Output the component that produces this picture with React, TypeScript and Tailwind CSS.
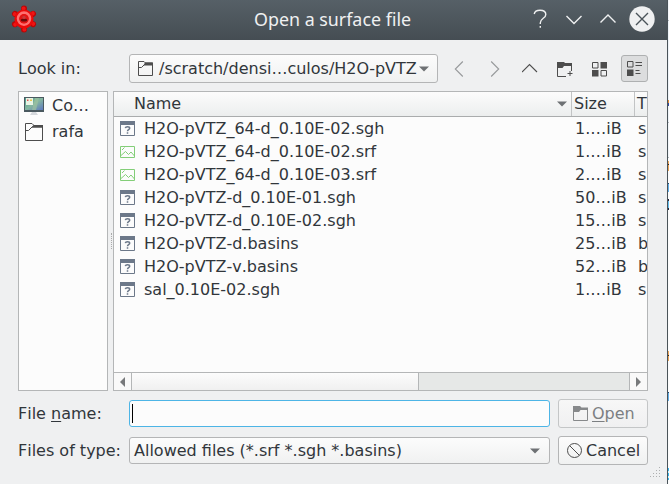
import React from "react";

type Kind = "unknown" | "image";
const files: { name: string; size: string; type: string; kind: Kind }[] = [
  { name: "H2O-pVTZ_64-d_0.10E-02.sgh", size: "1.…iB", type: "s", kind: "unknown" },
  { name: "H2O-pVTZ_64-d_0.10E-02.srf", size: "1.…iB", type: "s", kind: "image" },
  { name: "H2O-pVTZ_64-d_0.10E-03.srf", size: "2.…iB", type: "s", kind: "image" },
  { name: "H2O-pVTZ-d_0.10E-01.sgh", size: "50…iB", type: "s", kind: "unknown" },
  { name: "H2O-pVTZ-d_0.10E-02.sgh", size: "15…iB", type: "s", kind: "unknown" },
  { name: "H2O-pVTZ-d.basins", size: "25…iB", type: "b", kind: "unknown" },
  { name: "H2O-pVTZ-v.basins", size: "52…iB", type: "b", kind: "unknown" },
  { name: "sal_0.10E-02.sgh", size: "1.…iB", type: "s", kind: "unknown" },
];

// Slivers of the window behind the dialog: [height, colour]
const backdrop: [number, string][] = [
  [20, "#f3f6fa"], [1, "#b4b9be"], [79, "#eef3f8"], [3, "#e08a3c"], [3, "#344a9c"], [16, "#eef3f8"], [1, "#b4b9be"],
  [34, "#f1f5f9"], [1, "#b4b9be"], [3, "#fcfcfc"], [3, "#eda65a"], [1, "#33241a"], [6, "#eda65a"], [12, "#fcfcfc"],
  [1, "#1d4a70"], [8, "#65b1ea"], [7, "#fcfcfc"], [2, "#24243c"], [7, "#65c0f0"], [2, "#24243c"], [141, "#fcfcfc"],
  [4, "#eda65a"], [1, "#33241a"], [5, "#eda65a"], [31, "#fcfcfc"], [1, "#1d4a70"], [8, "#65b1ea"], [67, "#fcfcfc"],
  [3, "#38b8f0"], [2, "#d8f4fc"], [3, "#38b8f0"], [2, "#d8f4fc"], [2, "#38b8f0"], [4, "#fcfcfc"],
];

function AppIcon() {
  return (
    <svg width="26" height="28" viewBox="0 0 26 28" className="mb-[2px] shrink-0">
      {[0, 60, 120, 180, 240, 300].map((a) => (
        <g key={a} transform={`rotate(${a} 13 14)`}>
          <circle cx="13" cy="3.600" r="3" fill="#b80606" />
          <circle cx="12.600" cy="3.600" r="2" fill="#ee1414" />
        </g>
      ))}
      <circle cx="13" cy="14" r="9.600" fill="#ea0a0a" />
      <circle cx="13" cy="13.600" r="6" fill="none" stroke="#ff7070" strokeWidth="2.600" />
      <circle cx="13" cy="14" r="4.600" fill="#e01616" />
      <ellipse cx="13" cy="15" rx="3.200" ry="1.600" fill="#6a0b0b" />
      <circle cx="13" cy="12.400" r="1.700" fill="#c83a3a" />
    </svg>
  );
}

function Folder({ size = 15 }: { size?: number }) {
  return (
    <svg width={size} height={size} viewBox={`0 0 ${size} ${size}`} fill="none" stroke="#4d4d4d" className="shrink-0">
      <path d={size === 15 ? "M.5.500h5.500l1.500 1.500h7v12.500H.5z" : "M.5.500h6.500l2 2h8.500v15H.5z"} />
      <path d={size === 15 ? "M.5 6.500h3l3-3H14" : "M.5 7.500h3l4-4H17"} />
      <path d={size === 15 ? "M7 1.500h8V4.500H5.500z" : "M8.500 2H18v2.800H6.500z"} fill="#4d4d4d" stroke="none" />
    </svg>
  );
}

function Computer() {
  return (
    <svg width="20" height="18" viewBox="0 0 20 18" className="shrink-0">
      <defs>
        <linearGradient id="screen" x1="0" y1="0" x2="1" y2="1">
          <stop offset="0" stopColor="#4b9a8c" />
          <stop offset=".5" stopColor="#86b7a0" />
          <stop offset="1" stopColor="#5d78c0" />
        </linearGradient>
      </defs>
      <rect width="20" height="15" fill="#4b5a60" />
      <rect x="1" y="1" width="18" height="12" fill="url(#screen)" />
      <path d="M11 1h4l-3 12H8z" fill="#9cc2a0" opacity=".7" />
      <rect x="2" y="1" width="7" height="7" fill="#e8f4e4" />
      <path d="M3 2.500h1.500V4H3z" fill="#e05050" />
      <path d="M6 2.500h2V4H6z" fill="#e8c848" />
      <path d="M8 15h4l2 3H6z" fill="#d5d8dc" />
    </svg>
  );
}

function FileIcon({ kind }: { kind: Kind }) {
  if (kind === "image")
    return (
      <svg width="15" height="15" viewBox="0 0 15 15" fill="none" stroke="#83ce78" className="shrink-0">
        <path d="M.5 2.500h14v11H.5z" />
        <path d="M1 11.500l4.500-4 3 3L11 8l3.500 4M2 6l2.500-2.500" />
      </svg>
    );
  return (
    <svg width="15" height="15" viewBox="0 0 15 15" fill="none" stroke="#6c7889" className="shrink-0">
      <path d="M.5.5h14v14H.5z" />
      <path d="M0 0h15v4H0z" fill="#6c7889" stroke="none" />
      <path d="M5.300 7.200c.2-1 1-1.400 2.200-1.400 1.300 0 2.200.5 2.200 1.500 0 1.400-2.200 1.400-2.200 2.900M7.500 11.300v1.500" strokeWidth="1.500" />
    </svg>
  );
}

function Down() {
  return (
    <svg width="10" height="6" viewBox="0 0 10 6" className="shrink-0">
      <path d="M0 .5h10L5 5.500z" fill="#6e7174" />
    </svg>
  );
}

function Chevron({ d, color }: { d: string; color: string }) {
  return (
    <svg width="16" height="16" viewBox="0 0 16 16" fill="none" stroke={color} strokeWidth="1.100" className="shrink-0">
      <path d={d} />
    </svg>
  );
}

function TitleBar() {
  return (
    <header className="flex h-10 items-center bg-gradient-to-b from-[#566067] to-[#454d53] pl-[11px] text-[#eff0f1]">
      <AppIcon />
      <h1 className="mb-[2px] ml-[217px] w-[276px] whitespace-nowrap font-['Noto_Sans',sans-serif] text-[17.850px] leading-6">Open a surface file</h1>
      <svg width="126" height="28" viewBox="0 0 126 28" fill="none" stroke="#eff0f1" strokeWidth="1.400" className="mb-[2px] shrink-0">
        <path d="M4.200 9C4.700 6.300 6.900 5.200 10 5.200c3.400 0 5.800 1.500 5.800 4.200 0 4.300-5.500 3.500-5.500 8.600v1M10.300 21v1.800" />
        <path d="M36.500 11l7.500 7.500 7.500-7.500M70.500 17.500L78 10l7.500 7.500" />
        <circle cx="112" cy="14" r="12.700" fill="#eff0f1" stroke="none" />
        <path d="M106 8l12 12M118 8l-12 12" stroke="#4a5359" />
      </svg>
    </header>
  );
}

function Toolbar() {
  return (
    <div className="flex h-[29px] items-center">
      <span className="w-[111px]">Look in:</span>
      <div className="flex h-[29px] w-[309px] items-center rounded-[3px] border border-[#b4b5b6] bg-gradient-to-b from-[#fcfcfc] to-[#f0f1f1] pl-2">
        <Folder />
        <span className="ml-[6px] w-[260px] whitespace-nowrap">/scratch/densi…culos/H2O-pVTZ</span>
        <Down />
      </div>
      <div className="ml-[14px] flex items-center gap-[19px]">
        <Chevron d="M10.800.5L3.300 8l7.500 7.500" color="#97999b" />
        <Chevron d="M4.200.5L11.700 8l-7.500 7.500" color="#97999b" />
        <Chevron d="M0 11L7.500 3.500 15 11" color="#4d4d4d" />
        <svg width="16" height="16" viewBox="0 0 16 16" fill="none" stroke="#4d4d4d" className="shrink-0">
          <path d="M9 15.500H.5V3.500h14V10M10.500 12.500h5M13 10v5" />
          <path d="M0 1h7l1 1h7v3H7L5.500 7H0z" fill="#4d4d4d" stroke="none" />
        </svg>
        <svg width="16" height="16" viewBox="0 0 16 16" fill="none" stroke="#4d4d4d" className="shrink-0">
          <path d="M.5 1.500H6V7H.5zM9 9.500h5.500V15H9z" />
          <path d="M8.500 1H15v6.500H8.500zM0 9h6.500v6.500H0z" fill="#4d4d4d" stroke="none" />
        </svg>
      </div>
      <div className="ml-[13px] flex size-[27px] items-center justify-center rounded-[3px] border border-[#aeb0b1] bg-[#dcddde]">
        <svg width="15" height="15" viewBox="0 0 15 15" fill="none" stroke="#4d4d4d" className="shrink-0">
          <path d="M.5.5H6V6H.5zM8.500 1.500H15M8.500 4.500H15M8.500 9.500h4M8.500 12.500h5" />
          <path d="M0 8.500h6.500V15H0z" fill="#4d4d4d" stroke="none" />
        </svg>
      </div>
    </div>
  );
}

function FileTable() {
  return (
    <div className="flex h-[300px] w-[535px] flex-col overflow-hidden border border-[#b4b6b7] bg-[#fcfcfc]">
      <div className="flex h-[25px] shrink-0 items-center border-b border-[#aaacad] bg-gradient-to-b from-[#fcfcfc] to-[#eceeee]">
        <span className="ml-5 w-[423px]">Name</span>
        <Down />
        <div className="ml-[4px] h-full w-[63px] shrink-0 border-l border-[#c2c4c5] pl-[2px] leading-6">Size</div>
        <div className="h-full shrink-0 border-l border-[#c2c4c5] pl-[2px] leading-6">T</div>
      </div>
      <div className="flex-1">
        {files.map((f) => (
          <div key={f.name} className="flex h-[23px] items-center whitespace-nowrap">
            <div className="flex w-[461px] shrink-0 items-center pl-[6px]">
              <FileIcon kind={f.kind} />
              <span className="ml-[9px]">{f.name}</span>
            </div>
            <span className="w-[63px] shrink-0">{f.size}</span>
            <span>{f.type}</span>
          </div>
        ))}
      </div>
      <div className="flex h-[18px] shrink-0 border-t border-[#b4b6b7] bg-[#e6e8e7]">
        <div className="flex w-[18px] items-center justify-center border-r border-[#b4b6b7] bg-[#f9f9f9]">
          <svg width="5" height="10" viewBox="0 0 5 10"><path d="M5 0v10L0 5z" fill="#77797b" /></svg>
        </div>
        <div className="w-[287px] border-r border-[#b4b6b7] bg-gradient-to-b from-[#fcfcfc] to-[#f0f0f0]" />
        <div className="flex-1" />
        <div className="flex w-[18px] items-center border-l border-[#b4b6b7] bg-[#f9f9f9] pl-[6px]">
          <svg width="5" height="10" viewBox="0 0 5 10"><path d="M0 0v10l5-5z" fill="#77797b" /></svg>
        </div>
      </div>
    </div>
  );
}

export default function App() {
  return (
    <div className="flex h-[484px] w-[669px] overflow-hidden bg-[#fcfcfc] font-['DejaVu_Sans',sans-serif] text-[16px] leading-[22px] text-[#31363b] [font-kerning:none]">
      <main className="h-full w-[667px] shrink-0 bg-[#eff0f1]">
        <TitleBar />
        <div className="pl-[18px] pt-[14px]">
          <Toolbar />
          <div className="mt-2 flex">
            <div className="h-[300px] w-[90px] border border-[#b4b6b7] bg-[#fcfcfc] pt-px">
              <div className="flex h-[26px] items-center pl-[5px]">
                <Computer />
                <span className="ml-2">Co…</span>
              </div>
              <div className="flex h-[26px] items-center pl-[6px]">
                <Folder size={18} />
                <span className="ml-[9px]">rafa</span>
              </div>
            </div>
            <div className="flex w-[5px] items-center justify-end pr-px">
              <div className="h-4 border-l border-dotted border-[#aaa]" />
            </div>
            <FileTable />
          </div>
          <div className="mt-2 flex h-[29px] items-center">
            <label className="w-[111px]">File <u className="decoration-1 underline-offset-2">n</u>ame:</label>
            <div className="flex h-[27px] w-[421px] items-center rounded-[3px] border border-[#4db5e6] bg-[#fcfcfc] pl-[2px]">
              <span className="h-[19px] w-px bg-black" />
            </div>
            <div className="ml-2 flex h-[29px] w-[90px] items-center rounded-[3px] border border-[#c4c6c7] bg-gradient-to-b from-[#f7f7f7] to-[#f0f0f1] pl-[14px] text-[#7c7f82]">
              <svg width="15" height="15" viewBox="0 0 15 15" className="shrink-0">
                <path d="M.5 3.500h14v11H.5z" fill="none" stroke="#87898b" />
                <path d="M0 0h7l1.500 1.500H15V4H7.500L6 6H0z" fill="#87898b" />
              </svg>
              <span className="ml-1"><u className="decoration-1 underline-offset-2">O</u>pen</span>
            </div>
          </div>
          <div className="mt-2 flex h-[29px] items-center">
            <label className="w-[111px] whitespace-nowrap">Files of type:</label>
            <div className="flex h-[27px] w-[421px] items-center justify-between rounded-[3px] border border-[#b4b5b6] bg-gradient-to-b from-[#fcfcfc] to-[#f0f1f1] pl-1 pr-[9px]">
              <span className="whitespace-nowrap">Allowed files (*.srf *.sgh *.basins)</span>
              <Down />
            </div>
            <div className="ml-2 flex h-[29px] w-[90px] items-center rounded-[3px] border border-[#b4b5b6] bg-gradient-to-b from-[#fcfcfc] to-[#f0f1f1] pl-2">
              <svg width="15" height="15" viewBox="0 0 15 15" fill="none" stroke="#4d4d4d" className="shrink-0">
                <circle cx="7.500" cy="7.500" r="7" />
                <path d="M2.600 2.600l9.800 9.800" />
              </svg>
              <span className="ml-1">Cancel</span>
            </div>
          </div>
          <div className="flex h-[13px] items-end justify-end pr-[7px]">
            <svg width="10" height="11" viewBox="0 0 10 11" className="shrink-0" fill="#aeb0b1">
              {[[9, 0], [6, 3], [9, 3], [3, 6], [6, 6], [9, 6], [0, 9], [3, 9], [6, 9], [9, 9]].map(([x, y]) => (
                <rect key={`${x}-${y}`} x={x} y={y} width="1" height="1" />
              ))}
            </svg>
          </div>
        </div>
      </main>
      <div className="h-full w-px shrink-0 bg-[#4a5359]" />
      <div className="flex h-full w-px shrink-0 flex-col">
        {backdrop.map(([height, background], i) => (
          <div key={i} className="w-px shrink-0" style={{ height, background }} />
        ))}
      </div>
    </div>
  );
}
